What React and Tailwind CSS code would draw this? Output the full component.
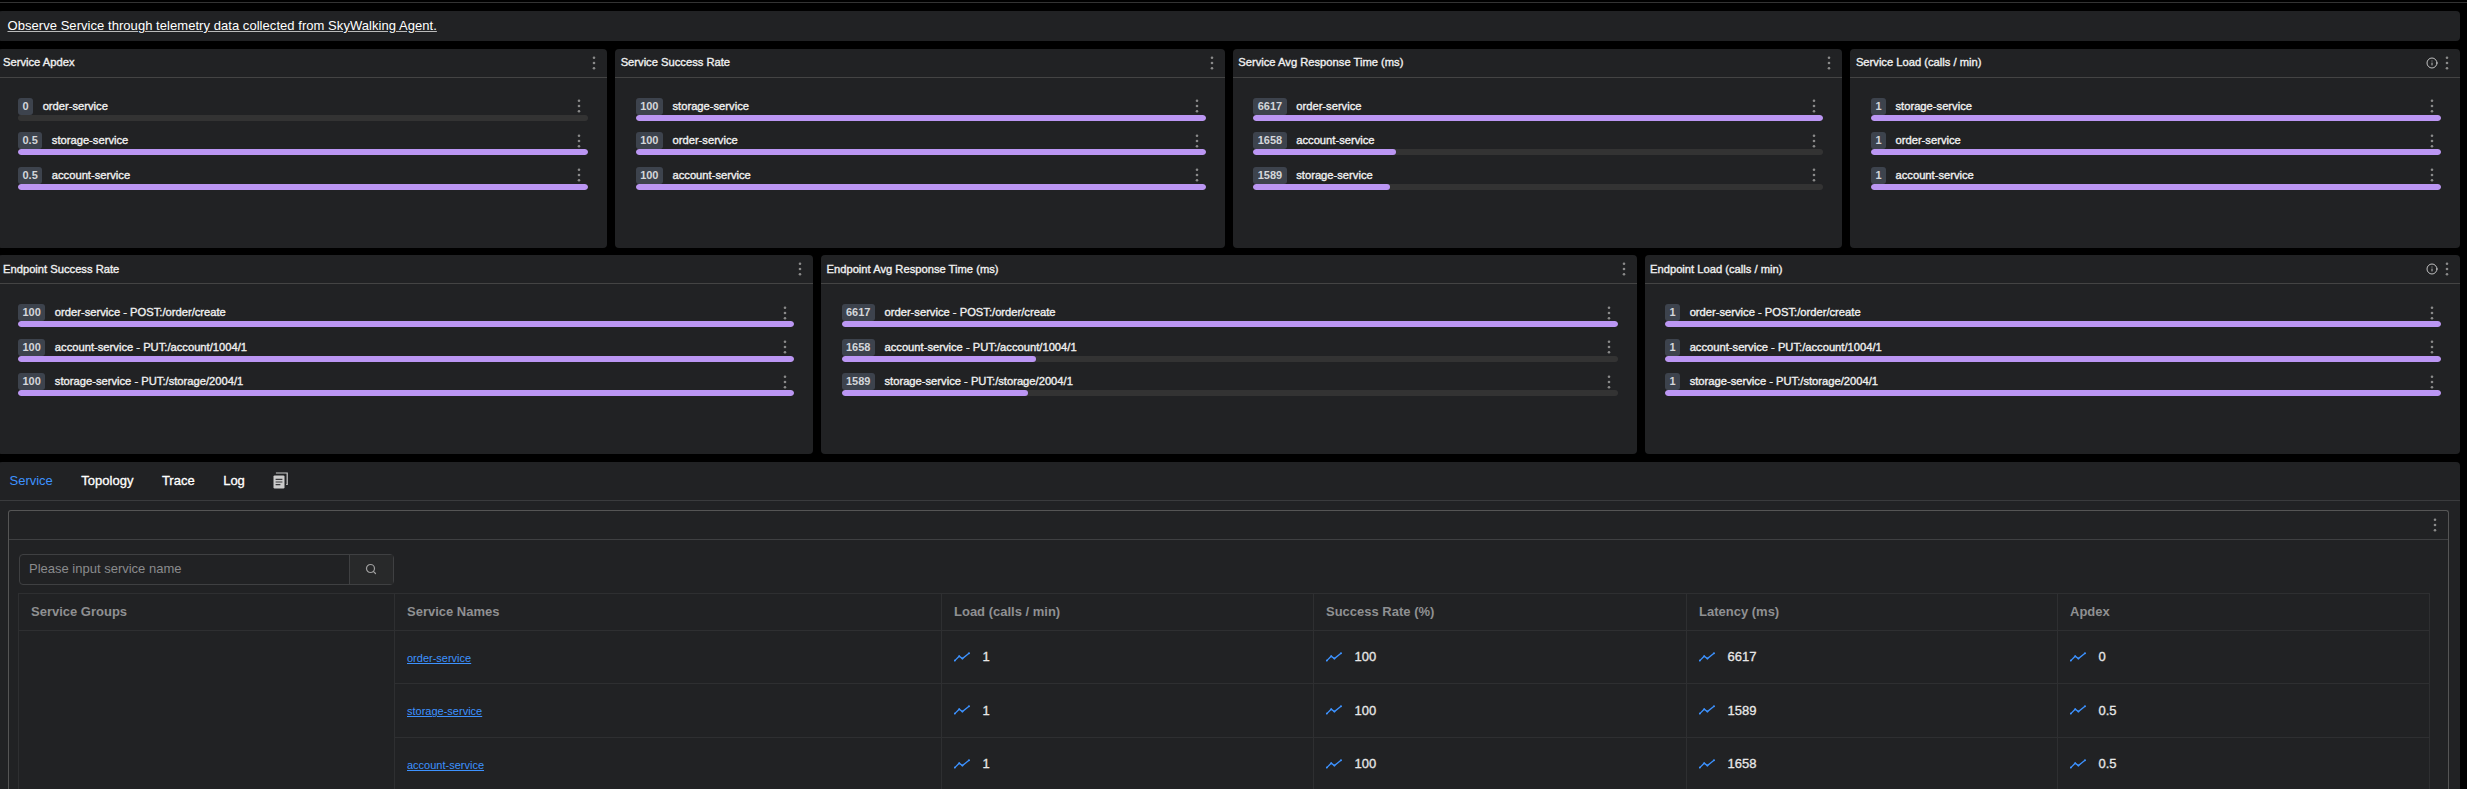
import React from "react";
import { Info, Search } from "lucide-react";

const Kebab = ({ color = "#8a8a8a" }) => (
  <svg width="4" height="14" viewBox="0 0 4 14" className="shrink-0">
    <circle cx="2" cy="1.7" r="1.3" fill={color} />
    <circle cx="2" cy="7" r="1.3" fill={color} />
    <circle cx="2" cy="12.3" r="1.3" fill={color} />
  </svg>
);

const Trend = () => (
  <svg width="16" height="10" viewBox="0 0 16 10" className="shrink-0">
    <polyline points="0.8,8.6 5.2,4.2 8.4,6.6 15,1.2" fill="none" stroke="#3d92ff" strokeWidth="1.3" />
    <circle cx="0.9" cy="8.6" r="1" fill="#3d92ff" />
    <circle cx="5.2" cy="4.2" r="1" fill="#3d92ff" />
    <circle cx="8.4" cy="6.6" r="1" fill="#3d92ff" />
    <circle cx="15" cy="1.2" r="1" fill="#3d92ff" />
  </svg>
);

const CopyDoc = () => (
  <svg width="15" height="17" viewBox="0 0 15 17">
    <path d="M3.5 1.6 V1 H14.2 V12.5 H13.2" fill="none" stroke="#c9c9c9" strokeWidth="1.2" />
    <rect x="0.5" y="3.4" width="11" height="13" rx="1.2" fill="#cbcbcb" />
    <path d="M2.6 7.4 H9.4 M2.6 10 H9.4 M2.6 12.6 H7.4" stroke="#3a3b3d" strokeWidth="1.1" />
  </svg>
);

function Row({ value, label, pct }) {
  return (
    <div className="mb-[11.5px]">
      <div className="flex h-[17px] items-center">
        <span className="flex h-[17px] items-center rounded-[3px] bg-[#3d434d] px-[4.5px] text-[11px] font-bold text-[#d4d6da]">
          {value}
        </span>
        <span className="ml-[9.5px] text-[11.2px] text-[#f0f0f0] [-webkit-text-stroke:0.35px]">{label}</span>
        <span className="ml-auto mr-[7px]">
          <Kebab />
        </span>
      </div>
      <div className="h-[6px] overflow-hidden rounded-[3px] bg-[#333333]">
        <div className="h-full rounded-[3px] bg-[#bb96f3]" style={{ width: `${pct}%` }} />
      </div>
    </div>
  );
}

function Card({ title, info, rows }) {
  return (
    <div className="h-[199px] rounded-[4px] bg-[#212224]">
      <div className="flex h-[29px] items-center border-b border-[#444444] pl-[5.5px] pr-[11px]">
        <span className="text-[11.2px] text-[#f0f0f0] [-webkit-text-stroke:0.35px]">{title}</span>
        <span className="ml-auto flex items-center gap-[7px]">
          {info && <Info size={12} color="#e8e8e8" strokeWidth={1.6} />}
          <Kebab />
        </span>
      </div>
      <div className="pl-[20.5px] pr-[19px] pt-[20px]">
        {rows.map((r) => (
          <Row key={r[1]} value={r[0]} label={r[1]} pct={r[2]} />
        ))}
      </div>
    </div>
  );
}

const rowCards = [
  {
    title: "Service Apdex",
    rows: [["0", "order-service", 0], ["0.5", "storage-service", 100], ["0.5", "account-service", 100]],
  },
  {
    title: "Service Success Rate",
    rows: [["100", "storage-service", 100], ["100", "order-service", 100], ["100", "account-service", 100]],
  },
  {
    title: "Service Avg Response Time (ms)",
    rows: [["6617", "order-service", 100], ["1658", "account-service", 25.05], ["1589", "storage-service", 24]],
  },
  {
    title: "Service Load (calls / min)",
    info: true,
    rows: [["1", "storage-service", 100], ["1", "order-service", 100], ["1", "account-service", 100]],
  },
];

const endpointCards = [
  {
    title: "Endpoint Success Rate",
    rows: [
      ["100", "order-service - POST:/order/create", 100],
      ["100", "account-service - PUT:/account/1004/1", 100],
      ["100", "storage-service - PUT:/storage/2004/1", 100],
    ],
  },
  {
    title: "Endpoint Avg Response Time (ms)",
    rows: [
      ["6617", "order-service - POST:/order/create", 100],
      ["1658", "account-service - PUT:/account/1004/1", 25.05],
      ["1589", "storage-service - PUT:/storage/2004/1", 24],
    ],
  },
  {
    title: "Endpoint Load (calls / min)",
    info: true,
    rows: [
      ["1", "order-service - POST:/order/create", 100],
      ["1", "account-service - PUT:/account/1004/1", 100],
      ["1", "storage-service - PUT:/storage/2004/1", 100],
    ],
  },
];

const services = [
  ["order-service", "1", "100", "6617", "0"],
  ["storage-service", "1", "100", "1589", "0.5"],
  ["account-service", "1", "100", "1658", "0.5"],
];

const Metric = ({ v }) => (
  <td className="border border-[#2e2f31] pl-[11.5px]">
    <div className="flex items-center">
      <Trend />
      <span className="ml-[13px] text-[13px] text-[#e8e8e8] [-webkit-text-stroke:0.3px]">{v}</span>
    </div>
  </td>
);

const Th = ({ children }) => (
  <th className="border border-[#2e2f31] pl-[12px] text-left text-[13px] font-bold text-[#8f9092]">{children}</th>
);

export default function App() {
  return (
    <div className="h-[789px] w-[2467px] overflow-hidden bg-black font-['Liberation_Sans',Arial,sans-serif]">
      <div className="h-[3px] border-b border-[#333333]" />
      <div className="ml-[-2.5px] flex w-[2462.5px] flex-col gap-[7.5px] pt-[8px]">
        <div className="flex h-[30px] items-center rounded-[4px] bg-[#212224] pl-[10px]">
          <span className="text-[13px] tracking-[0.05px] text-white underline decoration-[#bbbbbb]">
            Observe Service through telemetry data collected from SkyWalking Agent.
          </span>
        </div>
        <div className="grid grid-cols-4 gap-[8px]">
          {rowCards.map((c) => (
            <Card key={c.title} {...c} />
          ))}
        </div>
        <div className="grid grid-cols-3 gap-[8px]">
          {endpointCards.map((c) => (
            <Card key={c.title} {...c} />
          ))}
        </div>
        <div className="h-[340px] rounded-[4px] bg-[#212224]">
          <div className="flex h-[39px] items-center gap-[28.5px] border-b border-[#3a3b3d] pl-[12px] text-[13px] text-white [-webkit-text-stroke:0.3px]">
            <span className="text-[#3d92ff] [-webkit-text-stroke:0px]">Service</span>
            <span>Topology</span>
            <span>Trace</span>
            <span>Log</span>
            <CopyDoc />
          </div>
          <div className="ml-[10.5px] mr-[11.5px] mt-[9px] h-[300px] rounded-t-[3px] border border-b-0 border-[#555555]">
            <div className="flex h-[29px] items-center justify-end border-b border-[#3f4042] pr-[11px]">
              <Kebab />
            </div>
            <div className="ml-[9.5px] mt-[14px] flex h-[31px] w-[375px] rounded-[4px] border border-[#3f4042]">
              <div className="flex flex-1 items-center pl-[9.5px] text-[13px] text-[#8a8b8d]">Please input service name</div>
              <div className="flex w-[44px] items-center justify-center border-l border-[#3f4042] bg-[#28292a]">
                <Search size={12} color="#a0a0a0" strokeWidth={2.4} />
              </div>
            </div>
            <table className="ml-[9px] mt-[8px] w-[2411px] table-fixed border-collapse">
              <colgroup>
                <col className="w-[376px]" />
                <col className="w-[547px]" />
                <col className="w-[372px]" />
                <col className="w-[373px]" />
                <col className="w-[371px]" />
                <col className="w-[372px]" />
              </colgroup>
              <thead>
                <tr className="h-[37px]">
                  <Th>Service Groups</Th>
                  <Th>Service Names</Th>
                  <Th>Load (calls / min)</Th>
                  <Th>Success Rate (%)</Th>
                  <Th>Latency (ms)</Th>
                  <Th>Apdex</Th>
                </tr>
              </thead>
              <tbody>
                {services.map((s, i) => (
                  <tr key={s[0]} className="h-[53.5px]">
                    {i === 0 && <td rowSpan={3} className="border border-[#2e2f31]" />}
                    <td className="border border-[#2e2f31] pl-[12px]">
                      <a className="text-[11px] text-[#3d92ff] underline">{s[0]}</a>
                    </td>
                    <Metric v={s[1]} />
                    <Metric v={s[2]} />
                    <Metric v={s[3]} />
                    <Metric v={s[4]} />
                  </tr>
                ))}
              </tbody>
            </table>
          </div>
        </div>
      </div>
    </div>
  );
}
